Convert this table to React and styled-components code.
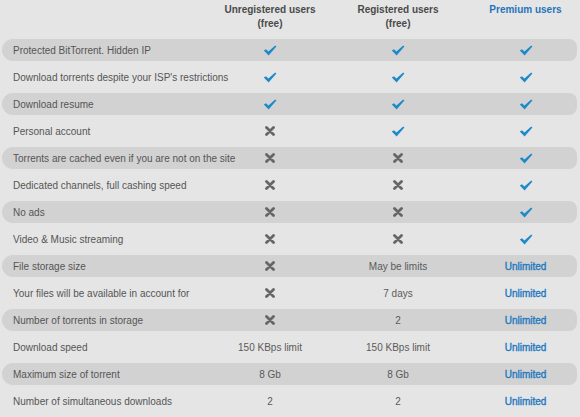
import React from 'react'
import styled, { createGlobalStyle } from 'styled-components'

const GlobalStyle = createGlobalStyle`
    html, body {
        margin: 0;
        padding: 0;
        background-color: #e5e5e5;
    }
    body {
        font-family: "Liberation Sans", Arial, sans-serif;
    }
`

const Page = styled.div`
    width: 580px;
    height: 417px;
    overflow: hidden;
    background-color: #e5e5e5;
    color: #555;
    font-size: 10px;
`

const Header = styled.div`
    display: grid;
    grid-template-columns: 204px 128px 128px 1fr;
    width: 575px;
    height: 39px;
    margin-left: 2px;
    padding-top: 3px;
    box-sizing: border-box;
`

const HeadCell = styled.div`
    display: flex;
    flex-direction: column;
    align-items: center;
    font-weight: bold;
    line-height: 14px;
    color: ${props => props.$premium ? '#1f74bb' : '#4a4a4a'};
    padding-left: ${props => props.$premium ? '12px' : '0'};
`

const Rows = styled.div`
    display: flex;
    flex-direction: column;
    gap: 5px;
`

const Row = styled.div`
    display: grid;
    grid-template-columns: 204px 128px 128px 1fr;
    align-items: center;
    width: 575px;
    height: 22px;
    margin-left: 2px;
    border-radius: 11px 8px 8px 11px;
    background-color: ${props => props.$shaded ? '#d2d2d2' : 'transparent'};
`

const Label = styled.div`
    padding-left: 11px;
    white-space: nowrap;
    color: #555;
`

const Cell = styled.div`
    display: flex;
    align-items: center;
    justify-content: center;
    padding-left: ${props => props.$premium ? '12px' : '0'};
    color: ${props => props.$premium ? '#1f78c0' : '#5a5a5a'};
    -webkit-text-stroke: ${props => props.$premium ? '0.35px #1f78c0' : '0'};
`

const Check = () => (
    <svg width="14" height="11" viewBox="0 0 14 11">
        <path d="M0.8 5.6 L3 4.2 L5.4 6.6 L12.2 0.6 L13.4 1.6 L5.6 10.4 Z" fill="#1e8ac7" />
    </svg>
)

const Cross = () => (
    <svg width="10" height="10" viewBox="0 0 10 10">
        <path d="M1.5 1.5 L8.5 8.5 M8.5 1.5 L1.5 8.5" stroke="#666" strokeWidth="2.8" strokeLinecap="round" />
    </svg>
)

const Y = 'check'
const N = 'cross'

const rows = [
    ['Protected BitTorrent. Hidden IP', Y, Y, Y],
    ["Download torrents despite your ISP's restrictions", Y, Y, Y],
    ['Download resume', Y, Y, Y],
    ['Personal account', N, Y, Y],
    ['Torrents are cached even if you are not on the site', N, N, Y],
    ['Dedicated channels, full cashing speed', N, N, Y],
    ['No ads', N, N, Y],
    ['Video & Music streaming', N, N, Y],
    ['File storage size', N, 'May be limits', 'Unlimited'],
    ['Your files will be available in account for', N, '7 days', 'Unlimited'],
    ['Number of torrents in storage', N, '2', 'Unlimited'],
    ['Download speed', '150 KBps limit', '150 KBps limit', 'Unlimited'],
    ['Maximum size of torrent', '8 Gb', '8 Gb', 'Unlimited'],
    ['Number of simultaneous downloads', '2', '2', 'Unlimited'],
]

function renderValue(v) {
    if (v === Y) return <Check />
    if (v === N) return <Cross />
    return v
}

export default function App() {
    return (
        <Page>
            <GlobalStyle />
            <Header>
                <div />
                <HeadCell><span>Unregistered users</span><span>(free)</span></HeadCell>
                <HeadCell><span>Registered users</span><span>(free)</span></HeadCell>
                <HeadCell $premium><span>Premium users</span></HeadCell>
            </Header>
            <Rows>
                {rows.map((r, i) => (
                    <Row key={i} $shaded={i % 2 === 0}>
                        <Label>{r[0]}</Label>
                        <Cell>{renderValue(r[1])}</Cell>
                        <Cell>{renderValue(r[2])}</Cell>
                        <Cell $premium>{renderValue(r[3])}</Cell>
                    </Row>
                ))}
            </Rows>
        </Page>
    )
}
